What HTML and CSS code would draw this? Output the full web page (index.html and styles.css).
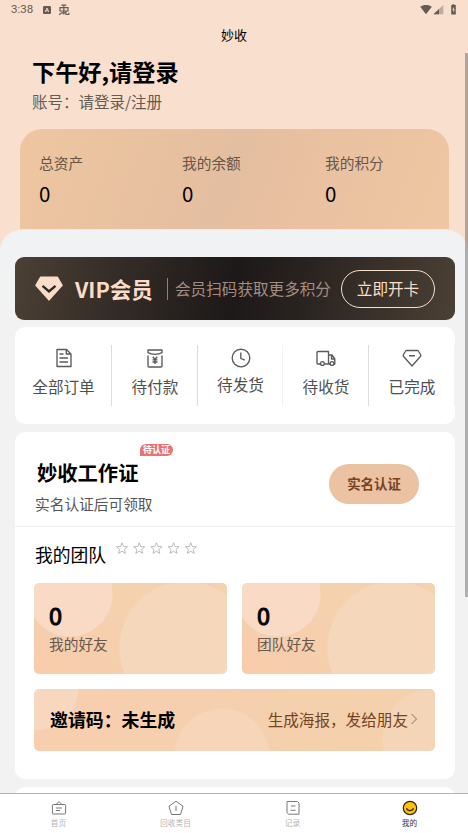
FILE: index.html
```html
<!DOCTYPE html>
<html lang="zh-CN">
<head>
<meta charset="utf-8">
<title>妙收</title>
<link rel="stylesheet" href="styles.css">
</head>
<body>
<div class="app">
  <header class="statusbar">
    <span class="time">3:38</span>
    <svg class="st-app" width="8" height="8" viewBox="0 0 8 8"><rect width="8" height="8" rx="1.2" fill="#655b54"/><path d="M2.2 6 4 2l1.8 4M3 4.8h2" fill="none" stroke="#f9dfcd" stroke-width=".9"/></svg>
    <svg class="st-bug" width="12" height="12" viewBox="0 0 12 12" fill="none" stroke="#655b54" stroke-width="1.200"><path d="M3.300 1.200h5M5.800 1v9.500M2 3.600h8v3.400H2zM1.200 10.800 3.600 8.800h4M8 7v3.500h2.800V8.800"/></svg>
    <svg class="st-signal" width="38" height="12" viewBox="0 0 38 12"><path d="M.2 2.700C3.500.3 8.500.3 11.800 2.700L6 10.200z" fill="#655b54"/><path d="M13.500 10.300 23.300 1v9.300z" fill="#bfaa9c"/><path d="M13.500 10.300 19 5.100v5.200z" fill="#655b54"/><path d="M31.200 1h1.200V.2h2V1h1.400v9.400h-4.600z" fill="#655b54"/><path d="M33.800 2.800 32.300 6h1.100v2.600L34.900 5.400h-1.100z" fill="#f9dfcd"/></svg>
  </header>
  <div class="navbar">妙收</div>

  <main class="content">
    <section class="profile">
      <h1>下午好,请登录</h1>
      <p>账号：请登录/注册</p>
    </section>
    <section class="assets">
      <div class="asset"><span>总资产</span><b>0</b></div>
      <div class="asset"><span>我的余额</span><b>0</b></div>
      <div class="asset"><span>我的积分</span><b>0</b></div>
    </section>

    <div class="sheet">
      <section class="vip">
        <svg class="vip-gem" width="28" height="25" viewBox="0 0 28 25"><path d="M5.800 1.200h16.400L27 9.300 14 23.800 1 9.300z" fill="#fbdcc8" stroke="#fbdcc8" stroke-width="1.600" stroke-linejoin="round"/><path d="m7.500 9.800 6.500 5.700 6.500-5.700" fill="none" stroke="#2f2925" stroke-width="2.400"/></svg>
        <strong>VIP会员</strong>
        <i class="vip-line"></i>
        <span class="vip-desc">会员扫码获取更多积分</span>
        <a class="vip-btn">立即开卡</a>
      </section>

      <section class="orders">
        <div class="order">
          <svg width="20" height="20" viewBox="0 0 20 20"><path d="M3 1.500h9.500L17 6v12.500H3zM12.300 1.700V6H17M5.500 6h4M5.500 10h8.500M5.500 14h8.500"/></svg>
          <span>全部订单</span>
        </div>
        <div class="order">
          <svg width="20" height="20" viewBox="0 0 20 20"><path d="M3 2h14v2.700c-4 2.300-10 2.300-14 0zM3 7.500V18a1 1 0 0 0 1 1h12a1 1 0 0 0 1-1V7.500M7.800 8.800l2.200 2.700 2.200-2.700M10 11.500v4.500M7.500 11.800h5M7.500 14h5"/></svg>
          <span>待付款</span>
        </div>
        <div class="order raised">
          <svg width="20" height="20" viewBox="0 0 20 20"><circle cx="10" cy="10" r="8.800"/><path d="M9.800 4.500v6l4 1.700"/></svg>
          <span>待发货</span>
        </div>
        <div class="order">
          <svg width="20" height="20" viewBox="0 0 20 20"><path d="M4.500 16H2a1 1 0 0 1-1-1V4.500a1 1 0 0 1 1-1h10.500V16M8.300 16h4.200M12.500 7h3.500l2.800 4v5h-1M14.300 16h-1.800M15.500 7v4h3.300"/><circle cx="6.400" cy="15.500" r="1.900"/><circle cx="16" cy="15.500" r="1.900"/></svg>
          <span>待收货</span>
        </div>
        <div class="order">
          <svg width="20" height="20" viewBox="0 0 20 20"><path d="M4 2.500h12L18.800 7v1L10 18 1.200 8V7zM7 7.700h6"/></svg>
          <span>已完成</span>
        </div>
      </section>

      <section class="team-card">
        <div class="badge-row">
          <div class="badge-info">
            <h2>妙收工作证<em>待认证</em></h2>
            <p>实名认证后可领取</p>
          </div>
          <a class="verify">实名认证</a>
        </div>
        <div class="team">
          <div class="team-head">
            <h3>我的团队</h3>
            <svg class="stars" width="82" height="13" viewBox="0 0 82 13">
              <defs><path id="star" d="m6 .8 1.500 3.700 4 .3-3.100 2.600 1 3.900L6 9.200l-3.400 2.100 1-3.900L.5 4.800l4-.3z"/></defs>
              <use href="#star"/><use href="#star" x="17.200"/><use href="#star" x="34.400"/><use href="#star" x="51.600"/><use href="#star" x="68.800"/>
            </svg>
          </div>
          <div class="friends">
            <div class="friend"><b>0</b><span>我的好友</span></div>
            <div class="friend"><b>0</b><span>团队好友</span></div>
          </div>
          <div class="invite">
            <strong>邀请码：未生成</strong>
            <span>生成海报，发给朋友</span>
            <svg width="8" height="12" viewBox="0 0 8 12"><path d="m1.500 1 5 5-5 5" fill="none" stroke="#87705f" stroke-width="1"/></svg>
          </div>
        </div>
      </section>
      <section class="next-card"></section>
    </div>
  </main>

  <nav class="tabbar">
    <a class="tab"><svg width="16" height="16" viewBox="0 0 16 16"><path d="M2.200 4.500h11.600a.8.800 0 0 1 .8.800v7.900a.8.800 0 0 1-.8.800H2.200a.8.800 0 0 1-.8-.8V5.300a.8.800 0 0 1 .8-.8zM5.300 4.300 8 1.500l2.700 2.800M5 8h6M5 10.500h4"/></svg><span>首页</span></a>
    <a class="tab"><svg width="16" height="16" viewBox="0 0 16 16"><path d="M8 1.200 15 6.300l-2.500 8.200h-9L1 6.300zM8 6v5"/></svg><span>回收类目</span></a>
    <a class="tab"><svg width="16" height="16" viewBox="0 0 16 16"><path d="M2 1.500h10.500L14 3v11.200H3.500L2 12.700zM6 6h4.500M5.500 10.300h5"/></svg><span>记录</span></a>
    <a class="tab active"><svg width="16" height="16" viewBox="0 0 16 16"><circle cx="8" cy="8" r="6.700"/><path d="M4.500 8.200c1.200 3.200 5.800 3.200 7 0"/></svg><span>我的</span></a>
  </nav>
  <i class="scrollbar"></i>
</div>
</body>
</html>
```
FILE: styles.css
```css
* { box-sizing: border-box; margin: 0; padding: 0; }
body {
  font-family: "Noto Sans CJK SC", sans-serif;
  color: #000;
  overflow: hidden;
}
h1, h2, h3, p, span, strong, a, b { white-space: nowrap; }
i, em { font-style: normal; }
svg { display: block; flex: none; }

.app {
  position: relative;
  display: flex;
  flex-direction: column;
  width: 468px;
  height: 833px;
  overflow: hidden;
  background: #f9dfcd;
}

.statusbar {
  display: flex;
  align-items: center;
  flex: none;
  height: 19px;
  padding: 0 10px 0 11px;
}
.time {
  width: 32px;
  font: 11.5px/19px Roboto, sans-serif;
  color: #655b54;
}
.st-bug { margin-left: 7px; }
.st-signal { margin-left: auto; }
.navbar {
  flex: none;
  height: 34px;
  font-size: 13px;
  line-height: 32px;
  text-align: center;
}

.content {
  display: flex;
  flex-direction: column;
  flex: 1;
  min-height: 0;
  overflow: hidden;
}
.profile { flex: none; height: 76px; padding-left: 32px; }
.profile h1 { font-size: 23.2px; line-height: 37px; }
.profile p { font-size: 15.5px; line-height: 23px; color: #665b54; }

.assets {
  display: grid;
  grid-template-columns: repeat(3, 143px);
  flex: none;
  height: 120px;
  margin: 0 19px 0 20px;
  padding-top: 22px;
  border-radius: 22px 22px 0 0;
  background: linear-gradient(110deg, #efc6a1 0%, #e4bea0 48%, #eac1a1 66%, #efc7a2 100%);
}
.asset { padding-left: 19px; }
.asset span { display: block; font-size: 14.7px; line-height: 24px; color: #66564a; }
.asset b { display: block; font-size: 20.5px; font-weight: 400; line-height: 37px; }

.sheet {
  position: relative;
  display: flex;
  flex-direction: column;
  flex: none;
  margin-top: -20px;
  padding: 27px 13px 0 15px;
  border-top: 1px solid #f8e6da;
  border-radius: 22px 22px 0 0;
  background: linear-gradient(#f0f2f4, #f2f2f2 80px);
}

.vip {
  display: flex;
  align-items: center;
  height: 63px;
  padding: 0 20px;
  border-radius: 9px;
  background: linear-gradient(100deg, #4b4035 0%, #352d27 22%, #1d1919 50%, #292320 65%, #4b4035 100%);
}
.vip strong {
  width: 92px;
  margin-left: 12px;
  font-size: 21.5px;
  line-height: 32px;
  color: #fbdcc8;
}
.vip-line { width: 1px; height: 22px; margin-right: 7px; background: #94806f; }
.vip-desc { padding-bottom: 1px; font-size: 15.6px; color: #a38d7e; }
.vip-btn {
  width: 94px;
  height: 38px;
  margin-left: auto;
  border: 1.5px solid #f9dfcd;
  border-radius: 19px;
  font-size: 15.6px;
  line-height: 35px;
  text-align: center;
  color: #f9dfcd;
}

.orders {
  display: grid;
  grid-template-columns: 97px 86px 85px 86px 86px;
  height: 97px;
  margin-top: 7px;
  padding-top: 18px;
  border-radius: 10px;
  background: #fff;
}
.order {
  display: flex;
  flex-direction: column;
  align-items: center;
  height: 61px;
  padding: 3px 0 0 1px;
  border-right: 1px solid #dcdcdc;
}
.order:nth-child(3),
.order:nth-child(5) { border-color: #f2f2f2; }
.order svg {
  fill: none;
  stroke: #5a5a5a;
  stroke-width: 1.35;
  stroke-linejoin: round;
}
.order span { margin-top: 6px; font-size: 15.6px; line-height: 24px; color: #4f4f4f; }
.order.raised span { margin-top: 4px; }

.team-card {
  height: 347px;
  margin-top: 8px;
  border-radius: 10px;
  background: #fff;
}
.badge-row {
  display: flex;
  justify-content: space-between;
  height: 95px;
  padding: 24px 36px 0 20px;
  border-bottom: 1px solid #eee;
}
.badge-info h2 {
  position: relative;
  width: max-content;
  padding-left: 2px;
  font-size: 20.3px;
  line-height: 32px;
}
.badge-info h2 em {
  position: absolute;
  left: 105px;
  top: -12px;
  width: 33px;
  height: 12px;
  border-radius: 6px 6px 6px 0;
  font-size: 9px;
  line-height: 11px;
  text-align: center;
  color: #fff;
  background: #e87373;
}
.badge-info p { margin-top: 5px; font-size: 14.7px; line-height: 22px; color: #555; }
.verify {
  width: 90px;
  height: 40px;
  margin-top: 8px;
  border-radius: 20px;
  font-size: 13.4px;
  font-weight: 700;
  line-height: 39px;
  text-align: center;
  color: #78421f;
  background: #ebc2a2;
}

.team { padding: 0 20px 0 19px; }
.team-head { display: flex; height: 56px; padding: 13px 0 0 1px; }
.team-head h3 { width: 81px; font-size: 17.8px; font-weight: 400; line-height: 28px; }
.stars { margin-top: 2px; fill: none; stroke: #aaa; stroke-width: .8; }

.friends { display: grid; grid-template-columns: 193px 193px; gap: 15px; }
.friend {
  height: 91px;
  padding: 16px 15px;
  border-radius: 5px;
  background:
    radial-gradient(circle at 36px 11px, #f9dbc5 42px, transparent 43px),
    radial-gradient(circle at 152px 65px, #f5d7bc 66px, transparent 67px),
    linear-gradient(30deg, #f7ccac, #f5d1ae 60%);
}
.friend b {
  display: block;
  font-size: 23.5px;
  font-weight: 400;
  line-height: 33px;
  -webkit-text-stroke: 1px #000;
}
.friend span { display: block; margin-top: 1px; font-size: 14.7px; line-height: 22px; color: #66584e; }

.invite {
  display: flex;
  align-items: center;
  height: 62px;
  margin-top: 15px;
  padding: 0 17px 2px 16px;
  border-radius: 5px;
  background:
    radial-gradient(circle at 4px 1px, #f7d8bf 39.500px, transparent 40.500px),
    radial-gradient(circle at 188px 67px, #f6d5b9 47px, transparent 48px),
    radial-gradient(circle at 397px 49px, #f5d5b8 48px, transparent 49px),
    linear-gradient(90deg, #f7cfae, #f4d0ad);
}
.invite strong { font-size: 17.9px; }
.invite span { margin-left: auto; font-size: 15.6px; color: #78421f; }
.invite svg { margin-left: 2px; }

.next-card {
  height: 60px;
  margin-top: 8px;
  border-radius: 10px;
  background: #fff;
}

.tabbar {
  display: grid;
  grid-template-columns: repeat(4, 117px);
  flex: none;
  height: 40px;
  border-top: 1px solid #b5b5b5;
  background: #fff;
}
.tab { display: flex; flex-direction: column; align-items: center; padding-top: 6px; }
.tab svg { fill: none; stroke: #777; stroke-width: 1; stroke-linejoin: round; }
.tab span { margin-top: 1px; font-size: 7.7px; line-height: 12px; color: #b5b5b5; }
.tab.active svg { stroke: #33270c; stroke-width: 1.2; }
.tab.active circle { fill: #fdc00f; }
.tab.active span { color: #333; }

.scrollbar {
  position: absolute;
  top: 53px;
  right: 0;
  width: 3px;
  height: 544px;
  background: rgba(80, 80, 80, .42);
}
```
